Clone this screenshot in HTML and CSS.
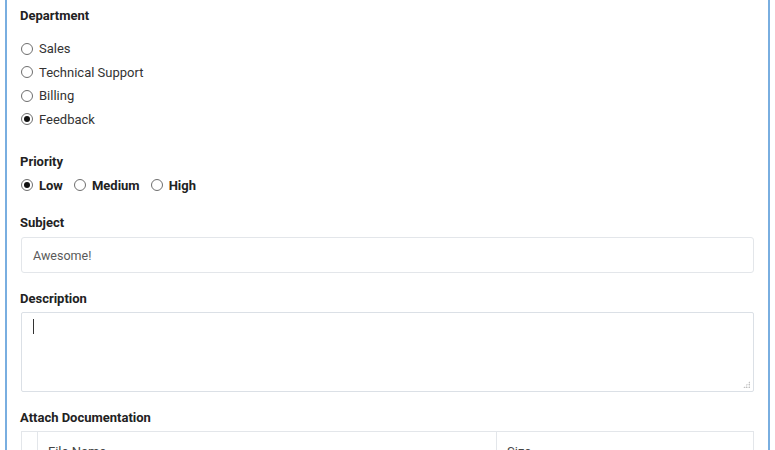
FILE: index.html
```html
<!DOCTYPE html>
<html>
<head>
<meta charset="utf-8">
<link rel="stylesheet" href="styles.css">
</head>
<body>
<div class="panel">
  <div class="field-label">Department</div>
  <div class="radio-list">
    <label class="radio-item"><span class="radio"></span>Sales</label>
    <label class="radio-item"><span class="radio"></span>Technical Support</label>
    <label class="radio-item"><span class="radio"></span>Billing</label>
    <label class="radio-item"><span class="radio checked"></span>Feedback</label>
  </div>

  <div class="field-label priority">Priority</div>
  <div class="radio-row">
    <label class="radio-inline"><span class="radio checked"></span>Low</label>
    <label class="radio-inline"><span class="radio"></span>Medium</label>
    <label class="radio-inline"><span class="radio"></span>High</label>
  </div>

  <div class="field-label subject">Subject</div>
  <div class="input">Awesome!</div>

  <div class="field-label section">Description</div>
  <div class="textarea">
    <span class="caret"></span>
    <span class="grip"></span>
  </div>

  <div class="field-label section">Attach Documentation</div>
  <div class="table">
    <div class="cell handle"></div>
    <div class="cell name">File Name</div>
    <div class="cell size">Size</div>
  </div>
</div>
</body>
</html>
```

FILE: styles.css
```css
html, body {
  margin: 0;
  padding: 0;
  background: #ffffff;
}

body {
  font-family: Roboto, "Noto Sans", Arial, sans-serif;
  font-size: 13px;
  color: #222222;
  height: 450px;
  overflow: hidden;
}

.panel {
  margin-left: 5px;
  width: 765px;
  height: 600px;
  border-left: 2px solid #79aee0;
  border-right: 2px solid #79aee0;
  padding: 6px 14px 0 13px;
  box-sizing: border-box;
  display: flex;
  flex-direction: column;
}

.field-label {
  font-weight: bold;
  line-height: 20px;
  color: #222222;
}

.field-label.priority {
  margin-top: 21px;
}

.field-label.subject {
  margin-top: 18px;
}

.field-label.section {
  margin-top: 16px;
}

.radio-list {
  margin-top: 11px;
  display: flex;
  flex-direction: column;
}

.radio-item {
  display: flex;
  align-items: center;
  height: 23.5px;
  color: #333333;
}

.radio {
  width: 12px;
  height: 12px;
  border: 1px solid #6e6e6e;
  border-radius: 50%;
  box-sizing: border-box;
  margin: 0 6px 0 1px;
  position: relative;
  flex: none;
  background: #ffffff;
}

.radio.checked::after {
  content: "";
  position: absolute;
  left: 2px;
  top: 2px;
  width: 6px;
  height: 6px;
  border-radius: 50%;
  background: #111111;
}

.radio-row {
  margin-top: 3px;
  display: flex;
  align-items: center;
  height: 20px;
  gap: 10px;
}

.radio-inline {
  display: flex;
  align-items: center;
  font-weight: bold;
  color: #222222;
}

.input {
  margin-top: 4px;
  margin-left: 1px;
  height: 36px;
  border: 1px solid #e3e6ea;
  border-radius: 3px;
  box-sizing: border-box;
  padding: 0 11px;
  display: flex;
  align-items: center;
  color: #5a5a5a;
  font-size: 12.5px;
}

.textarea {
  margin-top: 3px;
  margin-left: 1px;
  height: 80px;
  border: 1px solid #dbe0e6;
  border-radius: 2px;
  box-sizing: border-box;
  position: relative;
}

.caret {
  position: absolute;
  left: 11px;
  top: 6px;
  width: 1px;
  height: 15px;
  background: #333333;
}

.grip {
  position: absolute;
  right: 3px;
  bottom: 3px;
  width: 7px;
  height: 7px;
  background:
    radial-gradient(circle, #9a9a9a 0.7px, transparent 0.9px) 0 0 / 2.5px 2.5px;
  clip-path: polygon(100% 0, 100% 100%, 0 100%);
}

.table {
  margin-top: 3px;
  margin-left: 1px;
  border: 1px solid #e3e6ea;
  border-bottom: none;
  display: flex;
  height: 40px;
}

.cell {
  padding-top: 12px;
  color: #444444;
  font-size: 13px;
}

.handle {
  width: 15px;
  border-right: 1px solid #e3e6ea;
}

.name {
  width: 459px;
  border-right: 1px solid #e3e6ea;
  padding-left: 10px;
  box-sizing: border-box;
}

.size {
  padding-left: 10px;
}
```
